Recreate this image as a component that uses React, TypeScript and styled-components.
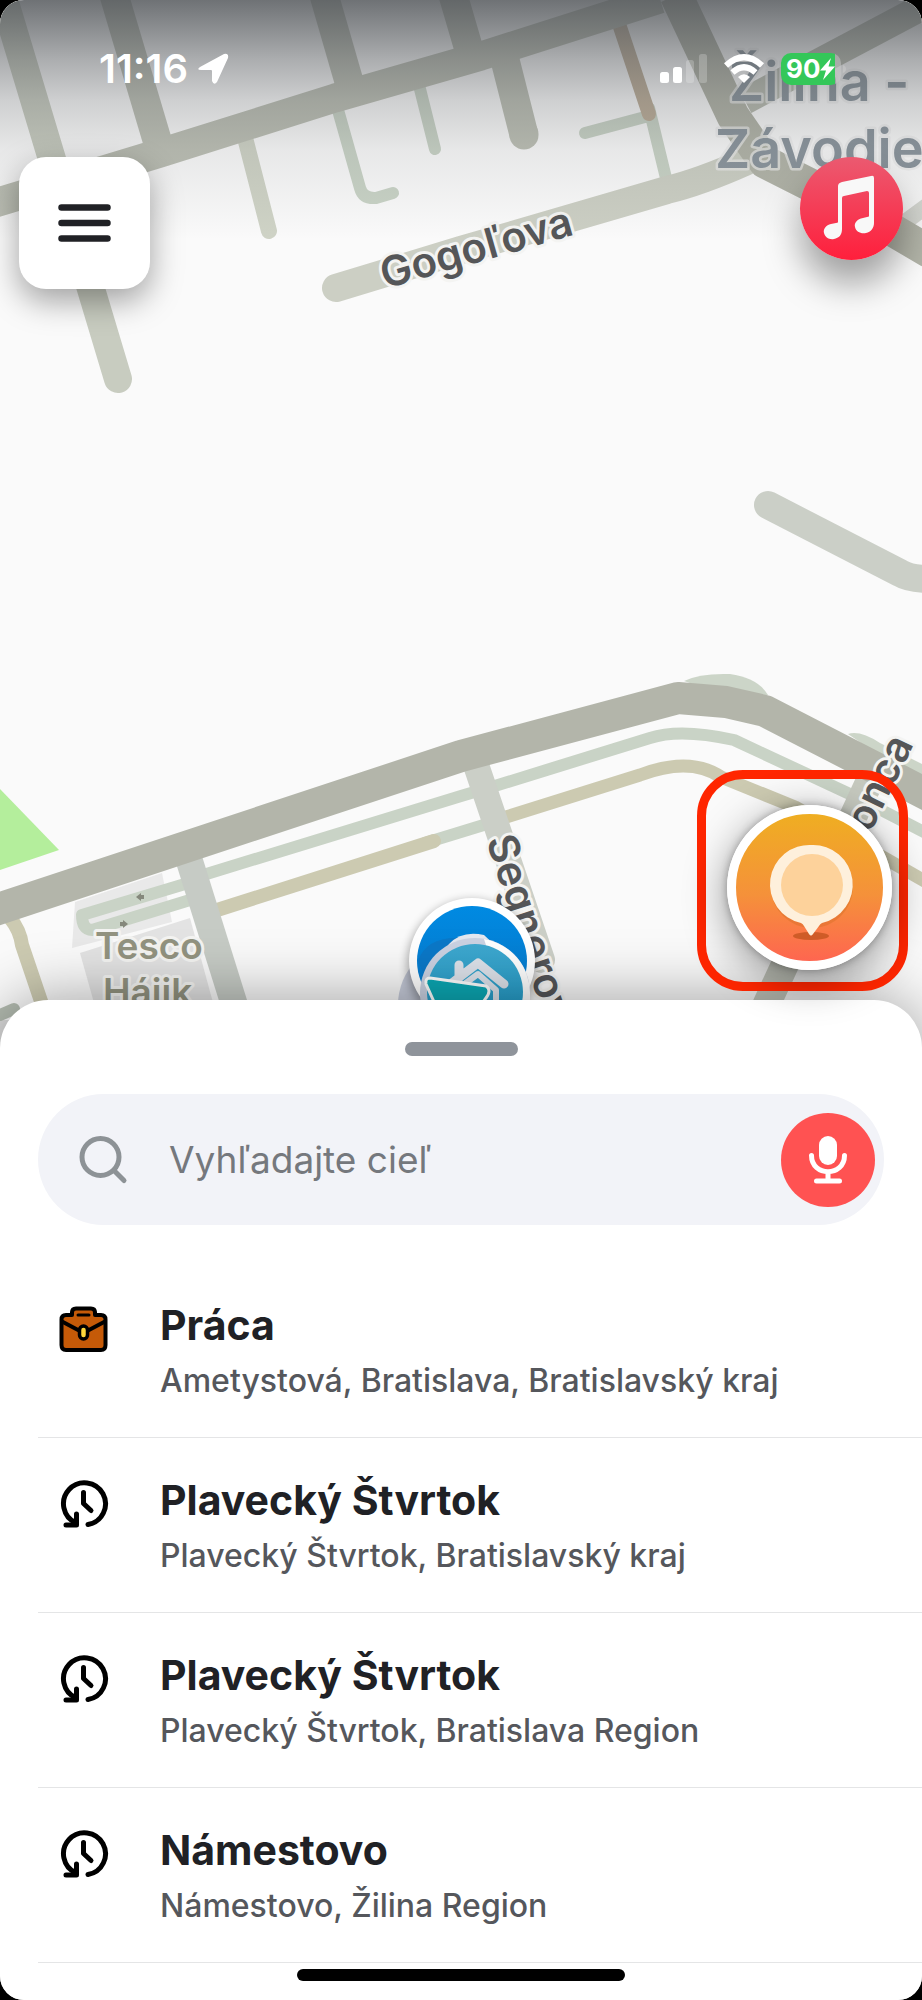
import React from "react";
import styled, { createGlobalStyle } from "styled-components";

const GlobalStyle = createGlobalStyle`
  *, *::before, *::after { box-sizing: border-box; }
  body {
    margin: 0;
    background: #000;
    font-family: Inter, "Liberation Sans", sans-serif;
    -webkit-font-smoothing: antialiased;
  }
  button, input { font: inherit; }
`;

const Screen = styled.main`
  display: flex;
  flex-direction: column;
  min-height: 100vh;
  overflow: hidden;
  border-radius: 24px;
  background: #fafafa;
`;

const MapArea = styled.section`
  position: relative;
  flex: 1 0 1048px;
`;

const MapCanvas = styled.svg`
  position: absolute;
  inset: 0;
  width: 100%;
  height: 100%;
`;

const TopShade = styled.div`
  position: absolute;
  inset: 0 0 auto;
  height: 240px;
  background: linear-gradient(
    rgba(80, 84, 88, 0.82) 0,
    rgba(80, 84, 88, 0.58) 40px,
    rgba(80, 84, 88, 0.46) 60px,
    rgba(80, 84, 88, 0.26) 100px,
    rgba(80, 84, 88, 0.11) 150px,
    rgba(80, 84, 88, 0) 240px
  );
`;

const Overlay = styled.div`
  position: relative;
`;

const StatusBar = styled.header`
  display: flex;
  align-items: center;
  justify-content: space-between;
  height: 157px;
  padding: 0 76px 20px 99px;
  color: #fff;
`;

const StatusGroup = styled.div<{ $gap: number }>`
  display: flex;
  align-items: center;
  gap: ${(p) => p.$gap}px;
`;

const Clock = styled.time`
  font-size: 40px;
  line-height: 44px;
  font-weight: 600;
`;

const Battery = styled.div`
  display: flex;
  align-items: center;
  height: 32px;
  width: 60px;
  padding-left: 5px;
  border-radius: 10px;
  background: linear-gradient(90deg, #34c759 54px, rgba(200, 200, 200, 0.5) 54px);
  font-size: 26px;
  line-height: 32px;
  font-weight: 700;
`;

const MapControls = styled.div`
  display: flex;
  align-items: flex-start;
  justify-content: space-between;
  padding: 0 19px;
`;

const MenuButton = styled.button`
  display: grid;
  place-items: center;
  width: 131px;
  height: 132px;
  padding: 0;
  border: 0;
  border-radius: 27px;
  background: #fff;
  box-shadow: 0 12px 32px rgba(0, 0, 0, 0.36);
`;

const MusicButton = styled.button`
  width: 103px;
  height: 103px;
  padding: 0;
  border: 0;
  border-radius: 50%;
  background: linear-gradient(#eb5a70, #ff1f3c);
  box-shadow: 0 24px 36px rgba(0, 0, 0, 0.36);
`;

const Spotlight = styled.div`
  position: absolute;
  z-index: 1;
  right: 14px;
  bottom: 57px;
  width: 211px;
  height: 221px;
  padding: 26px 0 0 21px;
  border: 9px solid #ff2600;
  border-radius: 46px;
`;

const ReportButton = styled.button`
  display: grid;
  place-items: center;
  width: 165px;
  height: 165px;
  padding: 0;
  border: 9px solid #fff;
  border-radius: 50%;
  background: linear-gradient(#efae22, #f5913a 55%, #fe6650);
  box-shadow: 0 10px 44px rgba(0, 0, 0, 0.42), 0 0 8px rgba(0, 0, 0, 0.3);
`;

const Sheet = styled.section`
  position: relative;
  display: flex;
  flex-direction: column;
  margin-top: -48px;
  padding: 42px 0 19px;
  border-radius: 48px 48px 0 0;
  background: #fff;
  box-shadow: 0 0 64px rgba(0, 0, 0, 0.38);
`;

const SheetHandle = styled.button`
  align-self: center;
  width: 113px;
  height: 14px;
  padding: 0;
  border: 0;
  border-radius: 7px;
  background: #8f949b;
`;

const SearchBar = styled.form`
  display: flex;
  align-items: center;
  height: 131px;
  margin: 38px;
  padding: 0 9px 0 40px;
  border-radius: 66px;
  background: #f2f3f8;
`;

const SearchLabel = styled.label`
  display: flex;
  flex: 1;
  align-items: center;
  gap: 41px;
  min-width: 0;
`;

const SearchInput = styled.input`
  flex: 1;
  min-width: 0;
  height: 64px;
  padding: 0;
  border: 0;
  outline: 0;
  background: transparent;
  color: #202125;
  font-size: 37px;
  line-height: 48px;
  &::placeholder { color: #75787d; opacity: 1; }
`;

const MicButton = styled.button`
  display: grid;
  place-items: center;
  width: 94px;
  height: 94px;
  padding: 0;
  border: 0;
  border-radius: 50%;
  background: #ff5252;
`;

const PlaceList = styled.ul`
  margin: 0;
  padding: 0 0 0 38px;
  list-style: none;
`;

const PlaceItem = styled.li`
  border-bottom: 1px solid #e4e5e6;
`;

const PlaceButton = styled.button`
  display: flex;
  align-items: flex-start;
  gap: 51px;
  width: 100%;
  padding: 38px 21px 36px;
  border: 0;
  background: none;
  text-align: left;
`;

const PlaceIcon = styled.span`
  display: flex;
  padding-top: 3px;
`;

const PlaceText = styled.span`
  display: flex;
  flex-direction: column;
  gap: 12px;
`;

const PlaceTitle = styled.span`
  color: #202125;
  font-size: 41px;
  line-height: 48px;
  font-weight: 700;
`;

const PlaceAddress = styled.span`
  color: #55575c;
  font-size: 32px;
  line-height: 40px;
  font-weight: 500;
`;

const HomeIndicator = styled.div`
  align-self: center;
  width: 328px;
  height: 12px;
  margin-top: 6px;
  border-radius: 6px;
  background: #000;
`;

const HistoryIcon = () => (
  <svg width="50" height="50" viewBox="0 0 50 50" fill="none" stroke="#000" strokeWidth="5" strokeLinecap="round" strokeLinejoin="round" aria-hidden="true">
    <path d="M29 45.500A21 21 0 1 0 17 44" />
    <path d="M7 46H17.500V35" />
    <path d="M24.500 13.500V24.500L32 31.500" />
  </svg>
);

const BriefcaseIcon = () => (
  <svg width="50" height="50" viewBox="0 0 50 50" fill="#c55a08" stroke="#000" strokeWidth="4" strokeLinecap="round" strokeLinejoin="round" aria-hidden="true">
    <path d="M13 13V8.500Q13 4.500 17 4.500H32Q36 4.500 36 8.500V13" />
    <path d="M2.500 15.500Q2.500 11 7 11H13H36H42Q46.500 11 46.500 15.500V41Q46.500 46 42 46H7Q2.500 46 2.500 41Z" stroke="none" />
    <path d="M13 11H7Q2.500 11 2.500 15.500V41Q2.500 46 7 46H42Q46.500 46 46.500 41V15.500Q46.500 11 42 11H36M13 11V9M36 11V9" fill="none" />
    <path d="M19 11H30" strokeWidth="3" />
    <path d="M3 17.500L20 26.500M46 17.500L29 26.500" />
    <rect x="20.500" y="22" width="8" height="13" rx="4" fill="#ffd83a" strokeWidth="3.500" />
  </svg>
);

interface Place {
  title: string;
  address: string;
  kind: "work" | "recent";
}

const places: Place[] = [
  { title: "Práca", address: "Ametystová, Bratislava, Bratislavský kraj", kind: "work" },
  { title: "Plavecký Štvrtok", address: "Plavecký Štvrtok, Bratislavský kraj", kind: "recent" },
  { title: "Plavecký Štvrtok", address: "Plavecký Štvrtok, Bratislava Region", kind: "recent" },
  { title: "Námestovo", address: "Námestovo, Žilina Region", kind: "recent" },
];

const StreetLabel = styled.text`
  fill: #555658;
  stroke: #f4f4f2;
  stroke-width: 6px;
  paint-order: stroke;
  stroke-linejoin: round;
  font-size: 42px;
  font-weight: 600;
`;

const DistrictLabel = styled(StreetLabel)`
  fill: #8b959d;
  stroke: rgba(235, 235, 235, 0.7);
  stroke-width: 5px;
  font-size: 54px;
`;

const PoiLabel = styled(StreetLabel)`
  fill: #929380;
  font-size: 37px;
`;

const CityMap = () => (
  <MapCanvas viewBox="0 0 922 1048" preserveAspectRatio="xMidYMin slice" role="img" aria-label="Map">
    <defs>
      <linearGradient id="markerBlue" x1="0" y1="0" x2="0" y2="1">
        <stop offset="0" stopColor="#008ae2" />
        <stop offset="1" stopColor="#0a74c4" />
      </linearGradient>
      <linearGradient id="markerCyan" x1="0" y1="0" x2="0" y2="1">
        <stop offset="0" stopColor="#3fa8cf" />
        <stop offset="1" stopColor="#1697c6" />
      </linearGradient>
      <filter id="soft" x="-30%" y="-30%" width="160%" height="160%">
        <feGaussianBlur stdDeviation="5" />
      </filter>
    </defs>
    <rect width="922" height="1048" fill="#fafafa" />
    <path d="M0 789L59 850L0 870Z" fill="#b4ee9c" />
    <path d="M75 902L162 873L172 922L72 948Z" fill="#e9e9e9" />
    <path d="M80 953L190 918L215 1010H96Z" fill="#e3e3e3" />
    <path d="M0 1020H40V1048H0Z" fill="#dedede" />

    <g fill="none" strokeLinejoin="round">
      <g stroke="#c9d3c6" strokeWidth="12" strokeLinecap="round">
        <path d="M338 110L360 188Q363 199 376 198L393 193" />
        <path d="M419 85L435 149" />
        <path d="M585 133L645 117M649 108L666 178" />
        <path d="M200 876L461 796L498 785L650 738Q680 728 734 740L854 796L930 835" />
        <path d="M425 843L500 820" />
        <path d="M185 884L82 915Q82 930 92 930L190 900" />
        <path d="M0 1015L14 1009" stroke="#b5bdb2" />
      </g>
      <path d="M684 681Q700 673 730 674Q758 678 768 695L740 700Z" fill="#ccd5c8" />
      <path d="M848 734Q860 730 880 743L930 768V790Z" fill="#ccd5c8" />
      <g stroke="#cccab1" strokeWidth="14">
        <path d="M214 911L434 841" strokeLinecap="round" />
        <path d="M506 817L640 775Q690 756 721 777L795 807L930 884" strokeWidth="13" />
        <path d="M10 918Q20 930 22 945L44 1010" />
      </g>
      <path d="M619 24L649 114" stroke="#bdae99" strokeWidth="14" strokeLinecap="round" />
      <g stroke="#c8ccc0" strokeWidth="28" strokeLinecap="round">
        <path d="M3 -4L118 379" />
        <path d="M243 130L269 231" strokeWidth="16" stroke="#cfd3c6" />
        <path d="M336 288L461 250L667 190Q700 182 745 162" stroke="#cccfc4" />
        <path d="M768 505L900 573Q910 579 930 579" stroke="#cbcfc7" />
        <path d="M186 850L236 1010" stroke="#c6cbc5" strokeWidth="27" />
        <path d="M475 762L542 960" stroke="#cbcfc7" strokeWidth="26" />
        <path d="M872 776L764 1010" stroke="#c6c9bf" />
        <path d="M905 222L935 200" stroke="#d6d8d2" strokeWidth="16" />
      </g>
      <g stroke="#bdc0b5" strokeWidth="29">
        <path d="M114 -5L160 150" />
        <path d="M324 -5L352 92" />
        <path d="M453 -5L472 60M505 60L524 135" />
        <path d="M524 134V135" strokeLinecap="round" />
        <path d="M-5 203L160 153L335 98L481 56L660 -1" />
        <path d="M745 101L930 3" stroke="#b8bbb0" strokeWidth="27" />
      </g>
      <g stroke="#b2b4a8" strokeWidth="33">
        <path d="M676 -5L733 116L765 162L850 205L930 252" />
        <path d="M-5 910L461 756L678 698L726 702L765 711L930 796" stroke="#b3b5aa" strokeWidth="32" />
      </g>
    </g>

    <g fill="#85887c">
      <path d="M136 897L141 893V895H144V899H141V901Z" />
      <path d="M128 924L123 920V922H120V926H123V928Z" />
    </g>

    <DistrictLabel x="729" y="101">Žilina -</DistrictLabel>
    <DistrictLabel x="715" y="168">Závodie</DistrictLabel>
    <StreetLabel transform="translate(385 289) rotate(-16)">Gogoľova</StreetLabel>
    <StreetLabel transform="translate(486 840) rotate(72)">Segnerova</StreetLabel>
    <StreetLabel transform="translate(870 834) rotate(-64)">onca</StreetLabel>
    <PoiLabel x="95" y="959">Tesco</PoiLabel>
    <PoiLabel x="103" y="1005">Hájik</PoiLabel>

    <circle cx="462" cy="1005" r="64" fill="#8b97b5" opacity="0.45" />
    <circle cx="472" cy="965" r="65" fill="#000" opacity="0.3" filter="url(#soft)" />
    <circle cx="472" cy="961" r="63" fill="#fff" />
    <circle cx="472" cy="961" r="55" fill="url(#markerBlue)" />
    <path d="M418 961Q426 938 456 938Q480 930 500 950L480 1010H440Z" fill="#0b78c8" />
    <path d="M449 944Q462 930 484 935L500 950H445Z" fill="#e4e8f0" />
    <circle cx="475" cy="993" r="55" fill="#cbd2e2" />
    <path d="M484 939A55 55 0 0 1 530 993V1020H510Z" fill="#fff" />
    <circle cx="475" cy="992" r="48" fill="url(#markerCyan)" />
    <g fill="none" stroke="#dde2ea" strokeWidth="9" strokeLinejoin="round" strokeLinecap="round">
      <path d="M459 978V965M448 986L478 963L504 984" />
      <path d="M459 1004V988L478 974L496 990V1010" strokeWidth="6" />
    </g>
    <path d="M430 978L486 986Q492 990 486 998L474 1015H440L426 984Q425 978 430 978Z" fill="#0ba8b4" stroke="#fff" strokeWidth="3" />
  </MapCanvas>
);

const LocationArrow = () => (
  <svg width="32" height="32" viewBox="0 0 32 32" fill="#fff" aria-hidden="true">
    <path d="M3 14L27 1Q32 0 31 5L20 29Q17 33 15 28V18Q15 17 14 17H4Q-1 17 3 14Z" />
  </svg>
);

const SignalIcon = () => (
  <svg width="47" height="30" viewBox="0 0 47 30" fill="#fff" aria-label="Signal">
    <rect x="0" y="18" width="9" height="11" rx="2.500" />
    <rect x="13" y="13" width="9" height="16" rx="2.500" />
    <rect x="26" y="6" width="8" height="23" rx="2.500" opacity="0.22" />
    <rect x="39" y="0" width="8" height="29" rx="2.500" opacity="0.22" />
  </svg>
);

const WifiIcon = () => (
  <svg width="40" height="30" viewBox="0 0 40 30" aria-label="Wi-Fi">
    <g fill="none" stroke="#fff" strokeWidth="6">
      <path d="M2 11.500Q20 -5 38 11.500" />
      <path d="M8.500 18.500Q20 8 31.500 18.500" />
    </g>
    <path d="M14 23Q20 17.500 26 23L20 29Z" fill="#fff" />
  </svg>
);

export default function App() {
  return (
    <>
      <GlobalStyle />
      <Screen>
        <MapArea>
          <CityMap />
          <TopShade />
          <Overlay>
            <StatusBar>
              <StatusGroup $gap={9}>
                <Clock>11:16</Clock>
                <LocationArrow />
              </StatusGroup>
              <StatusGroup $gap={17}>
                <SignalIcon />
                <WifiIcon />
                <StatusGroup $gap={2}>
                  <Battery>
                    90
                    <svg width="15" height="22" viewBox="0 0 15 22" fill="#fff" aria-label="Charging">
                      <path d="M11 0L0 12.500H6L3 22L15 8.500H8.500Z" />
                    </svg>
                  </Battery>
                  <svg width="3" height="8" viewBox="0 0 3 8" fill="#ccc" opacity="0.5" aria-hidden="true">
                    <path d="M0 0Q3 1 3 4T0 8Z" />
                  </svg>
                </StatusGroup>
              </StatusGroup>
            </StatusBar>
            <MapControls>
              <MenuButton aria-label="Menu">
                <svg width="53" height="38" viewBox="0 0 53 38" stroke="#202125" strokeWidth="6.500" strokeLinecap="round" aria-hidden="true">
                  <path d="M3.500 3.500H49.500M3.500 19H49.500M3.500 34.500H49.500" />
                </svg>
              </MenuButton>
              <MusicButton aria-label="Music">
                <svg width="103" height="103" viewBox="0 0 103 103" fill="#f8f8f8" aria-hidden="true">
                  <path d="M42 25Q38 26 38 29V65Q38 66 36 66L31 67C26 68 23 72 24 76C25 80 29 83 34 82C39 81 42 78 42 72V41Q42 39 44 39L67 34Q69 34 69 36V59Q69 60 67 60L63 61C57 62 54 66 55 70C56 75 61 77 66 76C71 75 74 71 74 66V21Q74 18 71 19Z" />
                </svg>
              </MusicButton>
            </MapControls>
          </Overlay>
          <Spotlight>
            <ReportButton aria-label="Report">
              <svg width="147" height="147" viewBox="0 0 147 147" aria-hidden="true">
                <ellipse cx="75" cy="122" rx="18" ry="4" fill="#c4551f" opacity="0.8" />
                <circle cx="76" cy="73" r="41" fill="#c8661c" opacity="0.3" />
                <path d="M76 31A39.500 39.500 0 0 1 86 109Q84 110 83 112L77 120Q75 123 73 120L68 112Q67 110 65 109A39.500 39.500 0 0 1 76 31Z" fill="#fef0dc" />
                <circle cx="76" cy="71" r="31" fill="#fdd29b" />
              </svg>
            </ReportButton>
          </Spotlight>
        </MapArea>
        <Sheet>
          <SheetHandle aria-label="Resize panel" />
          <SearchBar>
            <SearchLabel>
              <svg width="50" height="50" viewBox="0 0 50 50" fill="none" stroke="#8d9296" strokeWidth="5" strokeLinecap="round" aria-hidden="true">
                <circle cx="22.500" cy="22" r="18.500" />
                <path d="M36 35.500L46 45.500" />
              </svg>
              <SearchInput type="text" placeholder="Vyhľadajte cieľ" aria-label="Vyhľadajte cieľ" />
            </SearchLabel>
            <MicButton type="button" aria-label="Voice">
              <svg width="40" height="48" viewBox="0 0 40 48" fill="none" stroke="#fff" strokeWidth="5" strokeLinecap="round" aria-hidden="true">
                <rect x="11" y="0" width="18" height="29" rx="9" fill="#fff" stroke="none" />
                <path d="M3.500 19.500C3.500 41 36.500 41 36.500 19.500M20 36V44M8.500 45H31.500" />
              </svg>
            </MicButton>
          </SearchBar>
          <PlaceList>
            {places.map((place, index) => (
              <PlaceItem key={index}>
                <PlaceButton>
                  <PlaceIcon>{place.kind === "work" ? <BriefcaseIcon /> : <HistoryIcon />}</PlaceIcon>
                  <PlaceText>
                    <PlaceTitle>{place.title}</PlaceTitle>
                    <PlaceAddress>{place.address}</PlaceAddress>
                  </PlaceText>
                </PlaceButton>
              </PlaceItem>
            ))}
          </PlaceList>
          <HomeIndicator />
        </Sheet>
      </Screen>
    </>
  );
}
